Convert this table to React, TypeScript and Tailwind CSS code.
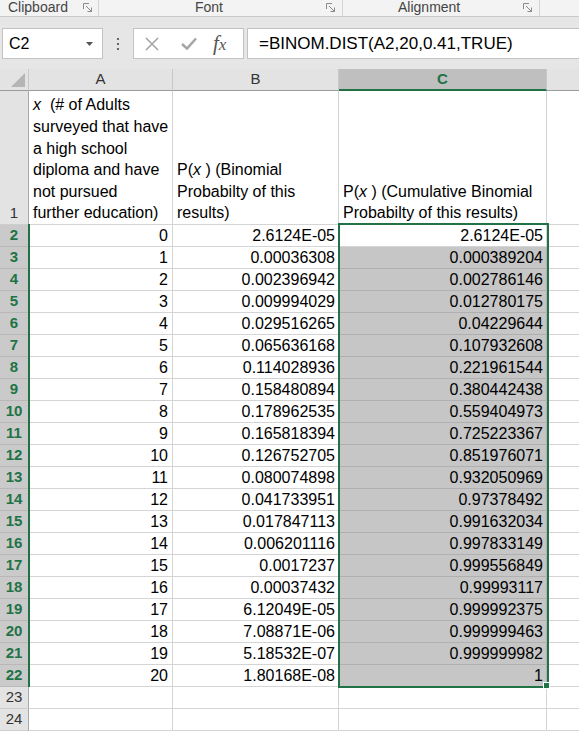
import React from 'react';

const bVals = [
  '2.6124E-05', '0.00036308', '0.002396942', '0.009994029', '0.029516265', '0.065636168',
  '0.114028936', '0.158480894', '0.178962535', '0.165818394', '0.126752705', '0.080074898',
  '0.041733951', '0.017847113', '0.006201116', '0.0017237', '0.00037432', '6.12049E-05',
  '7.08871E-06', '5.18532E-07', '1.80168E-08',
];

const cVals = [
  '2.6124E-05', '0.000389204', '0.002786146', '0.012780175', '0.04229644', '0.107932608',
  '0.221961544', '0.380442438', '0.559404973', '0.725223367', '0.851976071', '0.932050969',
  '0.97378492', '0.991632034', '0.997833149', '0.999556849', '0.99993117', '0.999992375',
  '0.999999463', '0.999999982', '1',
];

function Launcher() {
  return (
    <svg width="10" height="10" viewBox="0 0 10 10" className="shrink-0">
      <path d="M0.5 6 V0.5 H6" fill="none" stroke="#8a8a8a" strokeWidth="1" />
      <path d="M3 3 L8.5 8.5 M4.5 8.5 H8.5 V4.5" fill="none" stroke="#8a8a8a" strokeWidth="1" />
    </svg>
  );
}

function RowHead({ n, selected }: { n: number; selected?: boolean }) {
  return (
    <div
      className={
        'h-[22px] flex items-center justify-center border-r border-b text-[15px] ' +
        (selected
          ? 'bg-[#cacaca] border-r-[#9b9b9b] border-b-[#b8b8b8] text-[#217346] font-bold'
          : 'bg-[#e3e3e3] border-r-[#a8a8a8] border-b-[#cdcdcd] text-[#333]')
      }
    >
      {n}
    </div>
  );
}

export default function App() {
  const rows = Array.from({ length: 23 }, (_, i) => i + 2);

  return (
    <div className="w-[579px] h-[732px] overflow-hidden bg-white font-['Liberation_Sans',sans-serif]">
      {/* ribbon group labels */}
      <div className="h-[17px] flex bg-[#f3f3f3] border-b border-[#c9c9c9] text-[14px] leading-[15px] text-[#444] overflow-hidden">
        <div className="w-[99px] shrink-0 flex items-start border-r border-[#d4d4d4]">
          <span className="pl-[8px]">Clipboard</span>
          <span className="ml-auto mr-[5px] mt-[3px]"><Launcher /></span>
        </div>
        <div className="w-[244px] shrink-0 flex items-start border-r border-[#d4d4d4]">
          <span className="pl-[96px]">Font</span>
          <span className="ml-auto mr-[6px] mt-[3px]"><Launcher /></span>
        </div>
        <div className="w-[197px] shrink-0 flex items-start border-r border-[#d4d4d4]">
          <span className="pl-[55px]">Alignment</span>
          <span className="ml-auto mr-[6px] mt-[3px]"><Launcher /></span>
        </div>
      </div>

      {/* formula bar */}
      <div className="h-[52px] bg-[#e6e6e6] flex items-start pt-[11px]">
        <div className="ml-[2px] w-[101px] h-[31px] bg-white border border-[#c3c3c3] flex items-center pl-[6px] pr-[9px] text-[16px] text-black">
          C2
          <svg width="7" height="4" viewBox="0 0 7 4" className="ml-auto">
            <path d="M0 0 H7 L3.5 4 Z" fill="#555" />
          </svg>
        </div>
        <div className="w-[30px] h-[31px] flex flex-col items-center justify-center gap-[3px]">
          <span className="w-[2px] h-[2px] bg-[#666]" />
          <span className="w-[2px] h-[2px] bg-[#666]" />
          <span className="w-[2px] h-[2px] bg-[#666]" />
        </div>
        <div className="w-[111px] h-[31px] bg-white border border-[#c3c3c3] flex items-center">
          <svg width="14" height="14" viewBox="0 0 14 14" className="ml-[11px]">
            <path d="M1 1 L13 13 M13 1 L1 13" stroke="#a6a6a6" strokeWidth="1.6" />
          </svg>
          <svg width="16" height="13" viewBox="0 0 16 13" className="ml-[22px]">
            <path d="M1 7 L6 11.5 L15 1.5" fill="none" stroke="#a6a6a6" strokeWidth="2.6" />
          </svg>
          <span className="ml-[16px] font-['Liberation_Serif',serif] italic text-[21px] text-[#555] leading-none">
            f<span className="text-[17px]">x</span>
          </span>
        </div>
        <div className="ml-[3px] flex-1 h-[31px] bg-white border-y border-l border-[#c3c3c3] flex items-center pl-[11px] text-[17px] text-black whitespace-nowrap">
          =BINOM.DIST(A2,20,0.41,TRUE)
        </div>
      </div>

      {/* sheet grid */}
      <div className="relative">
        <div className="grid grid-cols-[29px_144px_166px_208px_32px] text-[16px] text-black">
          {/* column headers */}
          <div className="h-[22px] bg-[#e3e3e3] border-r border-r-[#c8c8c8] border-b border-b-[#9b9b9b] relative">
            <svg width="14" height="14" viewBox="0 0 14 14" className="absolute right-[3px] bottom-[3px]">
              <path d="M14 0 V14 H0 Z" fill="#b5b5b5" />
            </svg>
          </div>
          <div className="h-[22px] bg-[#e3e3e3] border-r border-r-[#c8c8c8] border-b border-b-[#9b9b9b] flex items-center justify-center text-[15px] text-[#333]">A</div>
          <div className="h-[22px] bg-[#e3e3e3] border-r border-r-[#c8c8c8] border-b border-b-[#9b9b9b] flex items-center justify-center text-[15px] text-[#333]">B</div>
          <div className="h-[22px] bg-[#bfbfbf] border-r border-r-[#c8c8c8] border-b-2 border-b-[#217346] flex items-center justify-center text-[15px] font-bold text-[#217346]">C</div>
          <div className="h-[22px] bg-[#e3e3e3] border-b border-b-[#9b9b9b]" />

          {/* row 1 */}
          <div className="h-[134px] bg-[#e3e3e3] border-r border-r-[#a8a8a8] border-b border-b-[#cdcdcd] flex items-end justify-center text-[15px] text-[#333] leading-[22px]">1</div>
          <div className="h-[134px] border-r border-b border-[#d4d4d4] flex flex-col justify-end pl-[4px] leading-[21.6px] whitespace-nowrap">
            <span><i>x</i>&nbsp;&nbsp;(# of Adults</span>
            <span>surveyed that have</span>
            <span>a high school</span>
            <span>diploma and have</span>
            <span>not pursued</span>
            <span>further education)</span>
          </div>
          <div className="h-[134px] border-r border-b border-[#d4d4d4] flex flex-col justify-end pl-[4px] leading-[21.6px] whitespace-nowrap">
            <span>P(<i>x</i> ) (Binomial</span>
            <span>Probabilty of this</span>
            <span>results)</span>
          </div>
          <div className="h-[134px] border-r border-b border-[#d4d4d4] flex flex-col justify-end pl-[4px] leading-[21.6px] whitespace-nowrap">
            <span>P(<i>x</i> ) (Cumulative Binomial</span>
            <span>Probabilty of this results)</span>
          </div>
          <div className="h-[134px] border-b border-[#d4d4d4]" />

          {/* data rows */}
          {rows.map((r) => {
            const idx = r - 2;
            const inData = idx <= 20;
            const sel = r >= 3 && r <= 22;
            return (
              <React.Fragment key={r}>
                <RowHead n={r} selected={inData} />
                <div className="h-[22px] border-r border-b border-[#d4d4d4] flex items-center justify-end pr-[4px]">
                  {inData ? idx : ''}
                </div>
                <div className="h-[22px] border-r border-b border-[#d4d4d4] flex items-center justify-end pr-[3px]">
                  {inData ? bVals[idx] : ''}
                </div>
                <div
                  className={
                    'h-[22px] border-r border-b flex items-center justify-end pr-[3px] ' +
                    (sel ? 'bg-[#c6c6c6] border-[#b0b0b0]' : 'border-[#d4d4d4]')
                  }
                >
                  {inData ? cVals[idx] : ''}
                </div>
                <div className="h-[22px] border-b border-[#d4d4d4]" />
              </React.Fragment>
            );
          })}
        </div>

        {/* selection outline, row header highlight bar, fill handle */}
        <div className="absolute left-[338px] top-[154px] w-[211px] h-[465px] border-2 border-[#217346] pointer-events-none" />
        <div className="absolute left-[28px] top-[155px] w-[2px] h-[463px] bg-[#217346]" />
        <div className="absolute left-[543px] top-[613px] w-[7px] h-[7px] bg-[#217346] border border-white" />
      </div>
    </div>
  );
}
